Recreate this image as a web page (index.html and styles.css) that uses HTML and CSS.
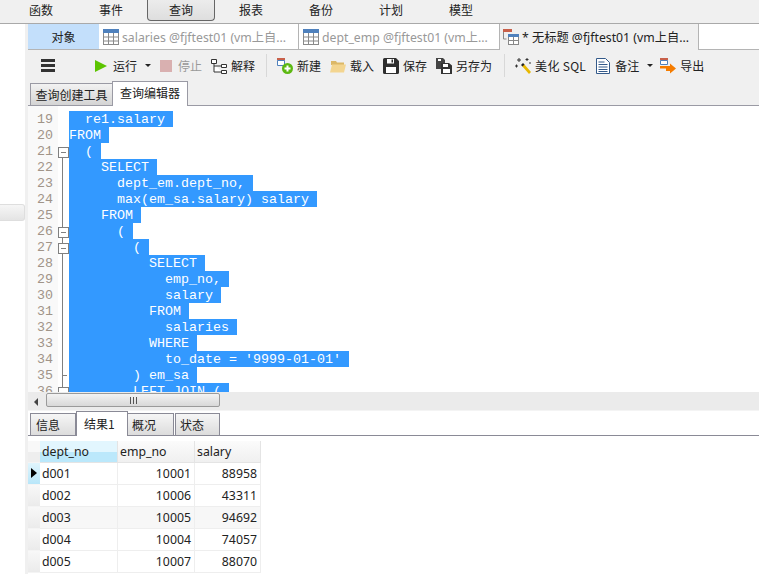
FILE: index.html
```html
<!DOCTYPE html>
<html lang="zh">
<head>
<meta charset="utf-8">
<title>查询</title>
<link rel="stylesheet" href="styles.css">
</head>
<body>
<nav class="menu">
  <span class="menu-item">函数</span>
  <span class="menu-item">事件</span>
  <span class="menu-item menu-on">查询</span>
  <span class="menu-item">报表</span>
  <span class="menu-item">备份</span>
  <span class="menu-item">计划</span>
  <span class="menu-item">模型</span>
</nav>
<div class="body">
  <aside class="side"><div class="handle"></div></aside>
  <main class="main">
    <div class="doc-tabs">
      <div class="doc-obj">对象</div>
      <div class="doc-tab">
        <svg class="ic" viewBox="0 0 16 16"><rect x=".5" y=".5" width="15" height="15" fill="#fff" stroke="#8a8a8a"/><rect x="0" y="0" width="16" height="4" fill="#4f81bd"/><path d="M.5 8h15M.5 12h15M5.5 4v12M10.5 4v12" stroke="#8a8a8a"/></svg>
        <span>salaries @fjftest01 (vm上自...</span>
      </div>
      <div class="doc-tab doc-tab2">
        <svg class="ic" viewBox="0 0 16 16"><rect x=".5" y=".5" width="15" height="15" fill="#fff" stroke="#8a8a8a"/><rect x="0" y="0" width="16" height="4" fill="#4f81bd"/><path d="M.5 8h15M.5 12h15M5.5 4v12M10.5 4v12" stroke="#8a8a8a"/></svg>
        <span>dept_emp @fjftest01 (vm上...</span>
      </div>
      <div class="doc-tab doc-active">
        <svg class="ic" viewBox="0 0 16 16"><rect x="0" y="0" width="9" height="3" fill="#c8604a"/><path d="M.5 3v7h3" fill="none" stroke="#888"/><rect x="5.5" y="5.5" width="10" height="10" fill="#fff" stroke="#888"/><rect x="5" y="5" width="11" height="3" fill="#4f81bd"/><path d="M10.5 8v8M5.5 11.5h10" stroke="#888"/></svg>
        <span>* 无标题 @fjftest01 (vm上自...</span>
      </div>
    </div>
    <div class="toolbar">
      <svg class="burger" viewBox="0 0 14 13"><path d="M0 0h14v3H0zM0 5h14v3H0zM0 10h14v3H0z" fill="#333"/></svg>
      <div class="tool tool-run"><svg class="ic-run" viewBox="0 0 12 12"><path d="M0 0l12 6-12 6z" fill="#5cc400"/></svg><span>运行</span></div>
      <i class="caret"></i>
      <div class="tool tool-off"><svg class="ic-run" viewBox="0 0 12 12"><rect width="12" height="12" fill="#d9b0b0"/></svg><span>停止</span></div>
      <div class="tool"><svg class="ic" viewBox="0 0 16 16"><path d="M.5 1.500h5v4h-5zM10.500 6.500h5v3h-5zM10.500 12.500h5v3h-5zM3 5.500v8.500h7.500M3 8h7.500" fill="#fff" stroke="#333"/></svg><span>解释</span></div>
      <i class="sep"></i>
      <div class="tool tool-first"><svg class="ic" viewBox="0 0 16 16"><rect x="0" y="0" width="8" height="2.500" fill="#c8604a"/><path d="M.5 2.500h7v5h-7z" fill="#fff" stroke="#4f81bd"/><circle cx="10.500" cy="10.500" r="5.500" fill="#5cb811"/><path d="M10.500 7.500v6M7.500 10.500h6" stroke="#fff" stroke-width="2"/></svg><span>新建</span></div>
      <div class="tool"><svg class="ic" viewBox="0 0 16 16"><path d="M1 4V3h5l1 1.500h7V7H1z" fill="#dcb867"/><path d="M0 14.500l2-8h14l-2 8z" fill="#f3d590"/></svg><span>载入</span></div>
      <div class="tool"><svg class="ic" viewBox="0 0 16 16"><path d="M0 1.500A1.500 1.500 0 0 1 1.500 0H13l3 3v11.500a1.500 1.500 0 0 1-1.500 1.500h-13A1.500 1.500 0 0 1 0 14.500z" fill="#2f2f2f"/><path d="M4 1h7v4.500H4zM3 9h10v6H3z" fill="#fff"/><path d="M8.500 1.500h1.500v3H8.500z" fill="#2f2f2f"/></svg><span>保存</span></div>
      <div class="tool"><svg class="ic" viewBox="0 0 16 16"><path d="M0 0h7l2 2v3H5v6H0z" fill="#444"/><path d="M2 1h3v2H2z" fill="#fff"/><path d="M5 5h8l3 2.500V16H5z" fill="#333"/><path d="M7 6h5v3H7zM7 11h7v4H7z" fill="#fff"/></svg><span>另存为</span></div>
      <i class="sep sep2"></i>
      <div class="tool tool-first"><svg class="ic" viewBox="0 0 16 16"><path d="M7 8l2-2 7 8-2 2z" fill="#e8b800"/><path d="M6 7l2-2 1.500 1.500-2 2z" fill="#222"/><path d="M4 0v4M2 2h4M12 0v3M10.500 1.500h3M0 8h3M1.500 6.500v3M14 5h2" stroke="#333"/></svg><span class="sql">美化 SQL</span></div>
      <div class="tool tool-note"><svg class="ic-note" viewBox="0 0 14 16"><path d="M.5.500h9l4 4v11H.5z" fill="#fff" stroke="#345a8a"/><path d="M2.500 4h6M2.500 6.500h9M2.500 9h9M2.500 11.500h9M2.500 13.500h9" stroke="#345a8a"/></svg><span>备注</span></div>
      <i class="caret"></i>
      <div class="tool tool-export"><svg class="ic" viewBox="0 0 16 16"><rect x="0" y="0" width="8" height="2.500" fill="#c8604a"/><path d="M.5 2.500h7v4h-7z" fill="#fff" stroke="#4f81bd"/><path d="M0 8h10V5.500l6 5-6 5V13H6v-2.500H0z" fill="#f57c00"/></svg><span>导出</span></div>
    </div>
    <div class="sub-tabs">
      <div class="sub-tab">查询创建工具</div>
      <div class="sub-tab sub-on">查询编辑器</div>
    </div>
    <div class="editor">
      <div class="ln"><b class="no">19</b><i class="fold"></i><code class="sel">  re1.salary </code></div>
      <div class="ln"><b class="no">20</b><i class="fold"></i><code class="sel">FROM </code></div>
      <div class="ln"><b class="no">21</b><i class="fold fold-start"></i><code class="sel">  ( </code></div>
      <div class="ln"><b class="no">22</b><i class="fold fold-line"></i><code class="sel">    SELECT </code></div>
      <div class="ln"><b class="no">23</b><i class="fold fold-line"></i><code class="sel">      dept_em.dept_no, </code></div>
      <div class="ln"><b class="no">24</b><i class="fold fold-line"></i><code class="sel">      max(em_sa.salary) salary </code></div>
      <div class="ln"><b class="no">25</b><i class="fold fold-line"></i><code class="sel">    FROM </code></div>
      <div class="ln"><b class="no">26</b><i class="fold fold-box"></i><code class="sel">      ( </code></div>
      <div class="ln"><b class="no">27</b><i class="fold fold-box"></i><code class="sel">        ( </code></div>
      <div class="ln"><b class="no">28</b><i class="fold fold-line"></i><code class="sel">          SELECT </code></div>
      <div class="ln"><b class="no">29</b><i class="fold fold-line"></i><code class="sel">            emp_no, </code></div>
      <div class="ln"><b class="no">30</b><i class="fold fold-line"></i><code class="sel">            salary </code></div>
      <div class="ln"><b class="no">31</b><i class="fold fold-line"></i><code class="sel">          FROM </code></div>
      <div class="ln"><b class="no">32</b><i class="fold fold-line"></i><code class="sel">            salaries </code></div>
      <div class="ln"><b class="no">33</b><i class="fold fold-line"></i><code class="sel">          WHERE </code></div>
      <div class="ln"><b class="no">34</b><i class="fold fold-line"></i><code class="sel">            to_date = '9999-01-01' </code></div>
      <div class="ln"><b class="no">35</b><i class="fold fold-tick"></i><code class="sel">        ) em_sa </code></div>
      <div class="ln"><b class="no">36</b><i class="fold fold-box"></i><code class="sel">        LEFT JOIN ( </code></div>
    </div>
    <div class="hscroll">
      <i class="arrow"></i>
      <div class="thumb"><span class="grip"></span></div>
    </div>
    <div class="res-tabs">
      <div class="res-tab">信息</div>
      <div class="res-tab res-on">结果1</div>
      <div class="res-tab res-3">概况</div>
      <div class="res-tab res-4">状态</div>
    </div>
    <div class="grid">
      <div class="mark head"></div><div class="hc hc-on">dept_no</div><div class="hc">emp_no</div><div class="hc">salary</div>
      <div class="mark mark-on"><i class="ptr"></i></div><div class="c">d001</div><div class="c num">10001</div><div class="c num">88958</div>
      <div class="mark"></div><div class="c">d002</div><div class="c num">10006</div><div class="c num">43311</div>
      <div class="mark"></div><div class="c alt">d003</div><div class="c num alt">10005</div><div class="c num alt">94692</div>
      <div class="mark"></div><div class="c">d004</div><div class="c num">10004</div><div class="c num">74057</div>
      <div class="mark"></div><div class="c">d005</div><div class="c num">10007</div><div class="c num">88070</div>
    </div>
  </main>
</div>
</body>
</html>
```
FILE: styles.css
```css
* { box-sizing: border-box; }
html, body { margin: 0; padding: 0; }
body {
  width: 759px;
  height: 574px;
  overflow: hidden;
  background: #fff;
  color: #222;
  font: 12px "Noto Sans", "Noto Sans CJK SC", sans-serif;
}
.menu {
  display: flex;
  height: 24px;
  padding-left: 6px;
  background: #f0f0f0;
  border-bottom: 1px solid #a9a9a9;
}
.menu-item {
  width: 70px;
  height: 21px;
  line-height: 19px;
  text-align: center;
  font-family: "Noto Sans CJK SC", sans-serif;
}
.menu-on {
  width: 68px;
  margin: 0 1px;
  border: 1px solid #666;
  border-top: 0;
  border-radius: 0 0 4px 4px;
  background: linear-gradient(#ececec, #dedede);
}
.body { display: flex; height: 550px; }
.side {
  width: 28px;
  flex: none;
  background: #fff;
  border-right: 3px solid #f0f0f0;
  padding-top: 180px;
}
.handle {
  height: 17px;
  width: 25px;
  background: linear-gradient(#f6f6f6, #e4e4e4);
  border: 1px solid #dedede;
  border-left: 0;
  border-radius: 0 3px 3px 0;
}
.main { flex: 1; min-width: 0; display: flex; flex-direction: column; }
.doc-tabs {
  display: flex;
  height: 26px;
  border-bottom: 1px solid #b4b4b4;
  font-size: 12.250px;
  color: #999;
  font-family: "Noto Sans", "Noto Sans CJK SC", sans-serif;
}
.doc-obj {
  width: 71px;
  line-height: 25px;
  text-align: center;
  background: #c3dffb;
  color: #222;
  font-size: 12px;
  font-family: "Noto Sans CJK SC", sans-serif;
}
.doc-tab {
  width: 199px;
  display: flex;
  align-items: center;
  gap: 3px;
  padding-left: 4px;
  white-space: nowrap;
  overflow: hidden;
}
.doc-tab2 { border-left: 1px solid #b4b4b4; width: 201px; padding-left: 4px; }
.doc-active {
  width: 200px;
  height: 26px;
  background: #f0f0f0;
  color: #222;
  border-left: 1px solid #b4b4b4;
  border-right: 1px solid #b4b4b4;
  padding-left: 3px;
}
.ic { width: 16px; height: 16px; flex: none; }
.toolbar {
  display: flex;
  align-items: center;
  height: 31px;
  background: #f0f0f0;
  padding-left: 13px;
  font-family: "Noto Sans CJK SC", sans-serif;
}
.burger { width: 14px; height: 13px; margin-right: 40px; flex: none; }
.tool { display: flex; align-items: center; gap: 4px; margin-left: 9px; white-space: nowrap; }
.tool-run { margin-left: 0; gap: 6px; }
.tool-off { color: #999; gap: 6px; }
.tool-note { margin-left: 10px; gap: 5px; }
.tool-first { margin-left: 10px; }
.tool-export { margin-left: 7px; }
.sql { letter-spacing: .3px; }
.ic-run { width: 12px; height: 12px; flex: none; }
.ic-note { width: 14px; height: 16px; flex: none; }
.caret {
  width: 0;
  height: 0;
  margin: 0 0 0 8px;
  border: 3px solid transparent;
  border-top: 3px solid #222;
  border-bottom: 0;
}
.sep { width: 1px; height: 23px; background: #d8d8d8; margin-left: 11px; }
.sep2 { margin-left: 12px; }
.sub-tabs {
  display: flex;
  align-items: flex-end;
  height: 25px;
  padding-left: 2px;
  background: #f0f0f0;
  border-bottom: 1px solid #9a9aa4;
  font-family: "Noto Sans CJK SC", sans-serif;
}
.sub-tab {
  width: 82px;
  height: 22px;
  line-height: 22px;
  text-align: center;
  background: linear-gradient(#f2f2f2, #d4d4d4);
  border: 1px solid #9a9aa4;
  border-bottom: 0;
  border-right: 0;
}
.sub-on {
  width: 76px;
  height: 25px;
  line-height: 22px;
  background: #fff;
  border-right: 1px solid #9a9aa4;
  margin-bottom: -1px;
}
.editor {
  height: 286px;
  padding-top: 5px;
  overflow: hidden;
  background: linear-gradient(90deg, #f9f9f9 30px, #fff 30px);
}
.ln { display: flex; height: 16px; }
.no {
  width: 25px;
  text-align: right;
  font: 13.330px/18px "Liberation Mono", monospace;
  color: #a09488;
  flex: none;
}
.fold { width: 16px; flex: none; position: relative; }
.fold-line::before, .fold-box::before, .fold-tick::before, .fold-start::before {
  content: "";
  position: absolute;
  left: 9px;
  top: 0;
  bottom: 0;
  border-left: 1px solid #808080;
}
.fold-start::before { top: 8px; }
.fold-box::after, .fold-start::after {
  content: "";
  position: absolute;
  left: 5px;
  top: 4px;
  width: 9px;
  height: 9px;
  background: linear-gradient(#808080, #808080) center / 5px 1px no-repeat #fff;
  border: 1px solid #808080;
}
.fold-tick::after {
  content: "";
  position: absolute;
  left: 9px;
  top: 8px;
  width: 5px;
  border-top: 1px solid #808080;
}
.sel {
  display: block;
  height: 16px;
  background: #3399ff;
  color: #fff;
  white-space: pre;
  font: 13.330px/18px "Liberation Mono", monospace;
}
.hscroll {
  display: flex;
  align-items: flex-start;
  height: 19px;
  padding-top: 1px;
  background: #ebebeb;
  border-bottom: 1px solid #f4f4f4;
}
.arrow {
  width: 0;
  height: 0;
  margin: 5px 0 0 6px;
  border: 4px solid transparent;
  border-right: 4px solid #444;
  border-left: 0;
}
.thumb {
  width: 174px;
  height: 14px;
  margin-left: 8px;
  border: 1px solid #9a9a9a;
  border-radius: 2px;
  background: linear-gradient(#f3f3f3, #d8d8d8);
  display: flex;
  align-items: center;
  justify-content: center;
}
.grip { width: 7px; height: 7px; background: repeating-linear-gradient(90deg, #555 0 1px, transparent 1px 3px); }
.res-tabs {
  display: flex;
  align-items: flex-end;
  height: 25px;
  padding-left: 2px;
  border-bottom: 1px solid #8a8a96;
  font-family: "Noto Sans CJK SC", sans-serif;
}
.res-tab {
  width: 46px;
  height: 22px;
  line-height: 22px;
  padding-left: 5px;
  background: linear-gradient(#f6f6f6, #dcdcdc);
  border: 1px solid #8a8a96;
  border-bottom: 0;
}
.res-on {
  width: 52px;
  height: 25px;
  line-height: 23px;
  padding-left: 7px;
  background: #fff;
  margin: 0 0 -1px 0;
}
.res-3 { width: 46px; padding-left: 4px; border-left: 0; }
.res-4 { width: 45px; margin-left: 1px; padding-left: 4px; }
.grid {
  display: grid;
  grid-template-columns: 12px 78px 77px 66px;
  grid-auto-rows: 22px;
  width: 233px;
  padding-top: 5px;
  box-sizing: content-box;
  font: 12.300px/21px "Noto Sans", sans-serif;
  color: #222;
}
.mark { background: linear-gradient(#f8f8f8, #ebebeb); border-bottom: 1px solid #f4f4f4; position: relative; }
.mark-on { background: linear-gradient(#e0f5fd, #b8e6f9); }
.head { background: linear-gradient(#f8f8f8 50%, #eeeeee 50%); }
.ptr {
  position: absolute;
  left: 3px;
  top: 5px;
  border: 5px solid transparent;
  border-left: 6px solid #000;
  border-right: 0;
}
.hc {
  padding-left: 2px;
  background: linear-gradient(#fbfbfb, #f0f0f0);
  border-right: 1px solid #e4e4e4;
  border-bottom: 1px solid #e4e4e4;
}
.hc-on { background: linear-gradient(#e2f6fe 50%, #bbe8fb 50%); }
.c {
  padding: 0 3px 0 2px;
  border-right: 1px solid #eee;
  border-bottom: 1px solid #eee;
}
.num { text-align: right; }
.alt { background: #f7f7f7; }
```
